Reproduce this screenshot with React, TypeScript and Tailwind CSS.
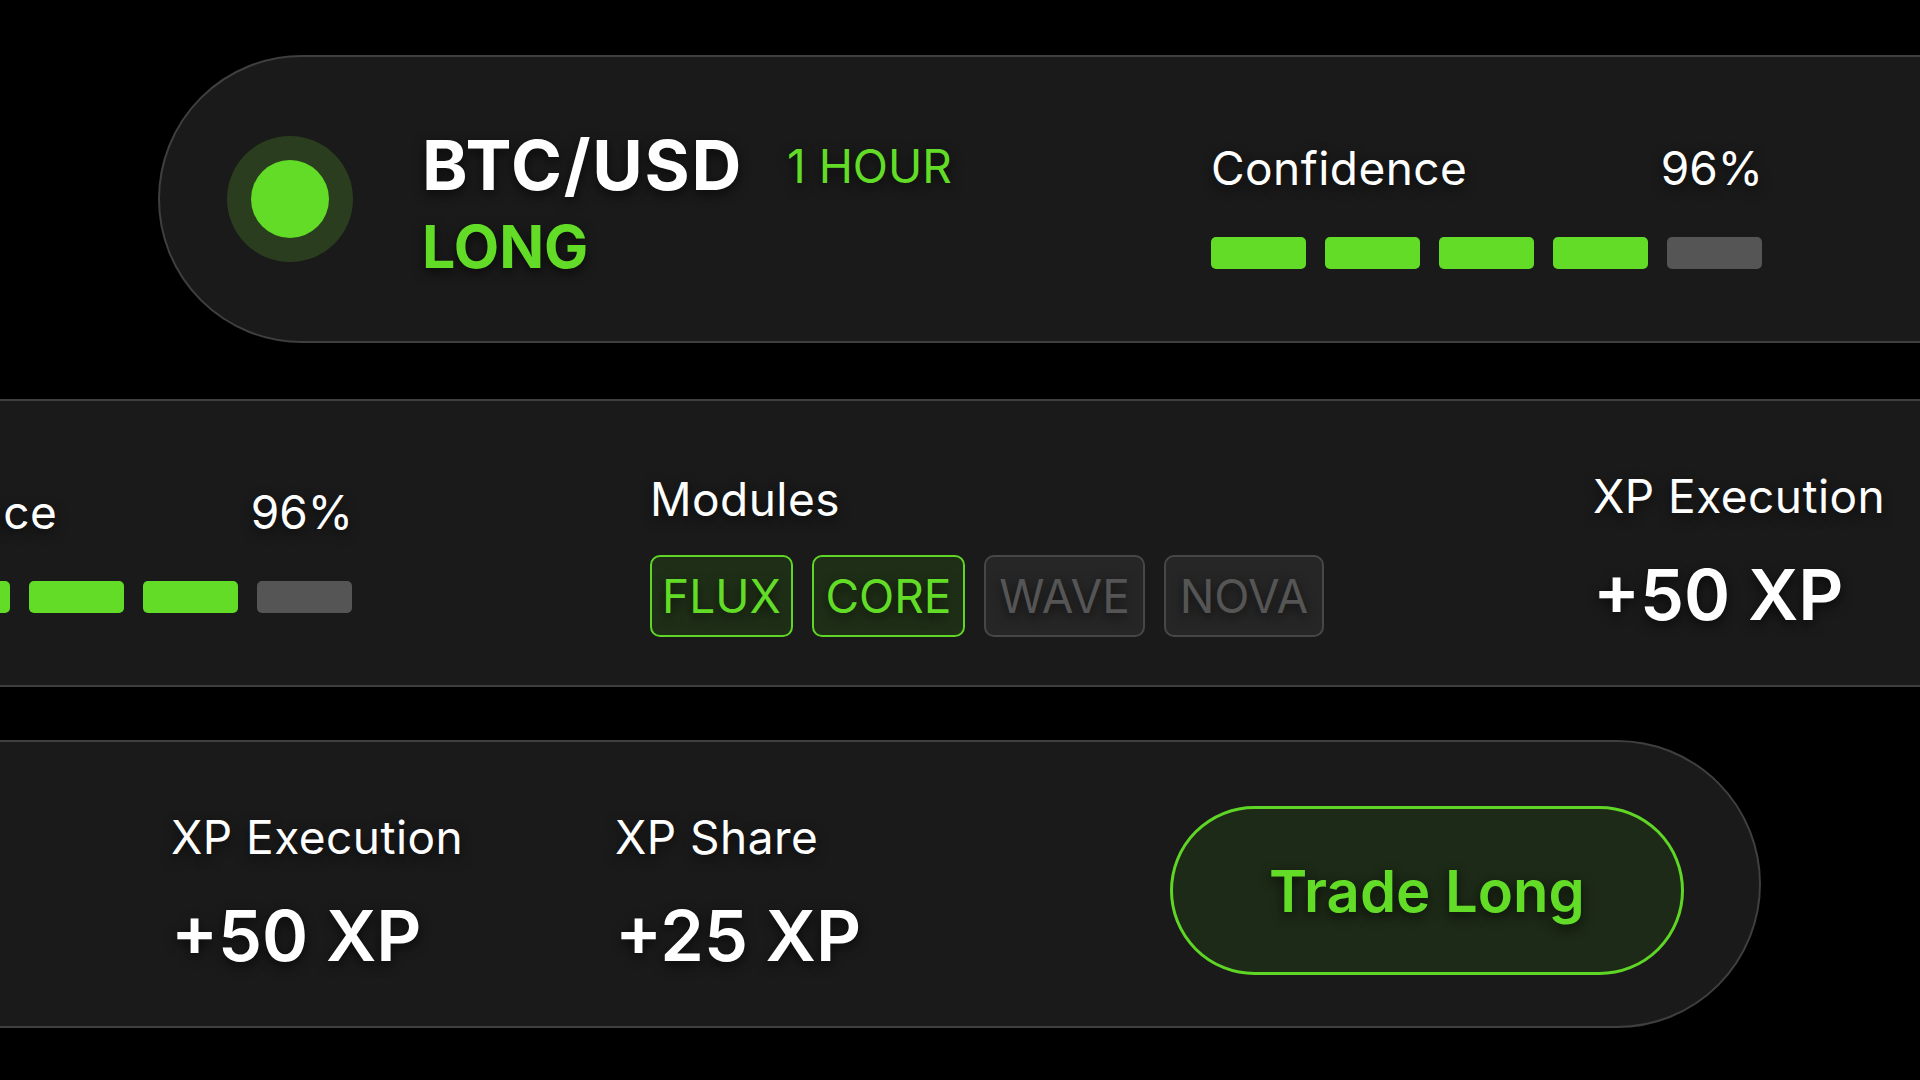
import React from 'react'

const SHADOW = '[text-shadow:0_4px_12px_rgba(0,0,0,0.65)]'

const MODULES = [
  { name: 'FLUX', active: true, width: 'w-[143px]' },
  { name: 'CORE', active: true, width: 'w-[153px]' },
  { name: 'WAVE', active: false, width: 'w-[161px]' },
  { name: 'NOVA', active: false, width: 'w-[160px]' },
]

const BARS = [true, true, true, true, false]

function SignalCard() {
  return (
    <div className="flex h-[288px] shrink-0 items-start rounded-full border-2 border-[#3f3f3f] bg-[#1a1a1a] pl-[67px] pr-[75px]">
      {/* Status dot */}
      <div className="flex h-[126px] w-[126px] shrink-0 items-center justify-center self-center rounded-full bg-[#2a3e1f]">
        <div className="h-[78px] w-[78px] rounded-full bg-[#62dc27]" />
      </div>

      {/* Pair + direction */}
      <div className={`ml-[69px] mt-[74px] w-[789px] shrink-0 ${SHADOW}`}>
        <div className="flex items-center">
          <span className="text-[69px] font-bold leading-none tracking-[0.025em] text-white">BTC/USD</span>
          <span className="ml-[44px] text-[46px] leading-none text-[#62dc27]">1 HOUR</span>
        </div>
        <div className="mt-[17px] text-[59px] font-bold leading-none text-[#62dc27]">LONG</div>
      </div>

      {/* Confidence */}
      <div className="mt-[88px] w-[552px] shrink-0">
        <div className={`flex justify-between text-[46px] leading-none tracking-[0.01em] text-white ${SHADOW}`}>
          <span>Confidence</span>
          <span className="tracking-normal">96%</span>
        </div>
        <div className="mt-[46px] flex gap-[19px]">
          {BARS.map((on, i) => (
            <div key={i} className={`h-[32px] w-[95px] rounded-[5px] ${on ? 'bg-[#62dc27]' : 'bg-[#555555]'}`} />
          ))}
        </div>
      </div>

      {/* Modules */}
      <div className="ml-[297px] mt-[75px] w-[943px] shrink-0">
        <div className={`text-[46px] leading-none tracking-[0.01em] text-white ${SHADOW}`}>Modules</div>
        <div className="mt-[33px] flex gap-[19px]">
          {MODULES.map(m => (
            <div
              key={m.name}
              className={`flex h-[82px] items-center justify-center rounded-[10px] border-2 text-[46px] leading-none ${m.width} ${SHADOW} ${
                m.active
                  ? 'border-[#5fd626] bg-[#1f2f17] text-[#62dc27]'
                  : 'border-[#474747] bg-[#262626] text-[#555555]'
              }`}>
              {m.name}
            </div>
          ))}
        </div>
      </div>

      {/* XP */}
      <div className={`mt-[72px] w-[444px] shrink-0 ${SHADOW}`}>
        <div className="text-[46px] leading-none tracking-[0.01em] text-white">XP Execution</div>
        <div className="mt-[41px] text-[70px] font-semibold leading-none text-white">+50 XP</div>
      </div>
      <div className={`mt-[72px] w-[555px] shrink-0 ${SHADOW}`}>
        <div className="text-[46px] leading-none tracking-[0.01em] text-white">XP Share</div>
        <div className="mt-[41px] text-[70px] font-semibold leading-none text-white">+25 XP</div>
      </div>

      {/* Action */}
      <button className="mt-[64px] flex h-[169px] w-[514px] shrink-0 items-center justify-center rounded-full border-[3px] border-[#5fd626] bg-[#1d2a17]">
        <span className={`text-[58px] font-semibold leading-none text-[#62dc27] ${SHADOW}`}>Trade Long</span>
      </button>
    </div>
  )
}

export default function App() {
  return (
    <div className="h-[1080px] w-[1920px] overflow-hidden bg-black pt-[55px] font-['Inter',sans-serif]">
      <div className="flex w-full overflow-hidden">
        <div className="ml-[158px] flex shrink-0">
          <SignalCard />
        </div>
      </div>
      <div className="mt-[56px] flex w-full overflow-hidden">
        <div className="ml-[-1252px] flex shrink-0">
          <SignalCard />
        </div>
      </div>
      <div className="mt-[53px] flex w-full overflow-hidden">
        <div className="ml-[-2674px] flex shrink-0">
          <SignalCard />
        </div>
      </div>
    </div>
  )
}
